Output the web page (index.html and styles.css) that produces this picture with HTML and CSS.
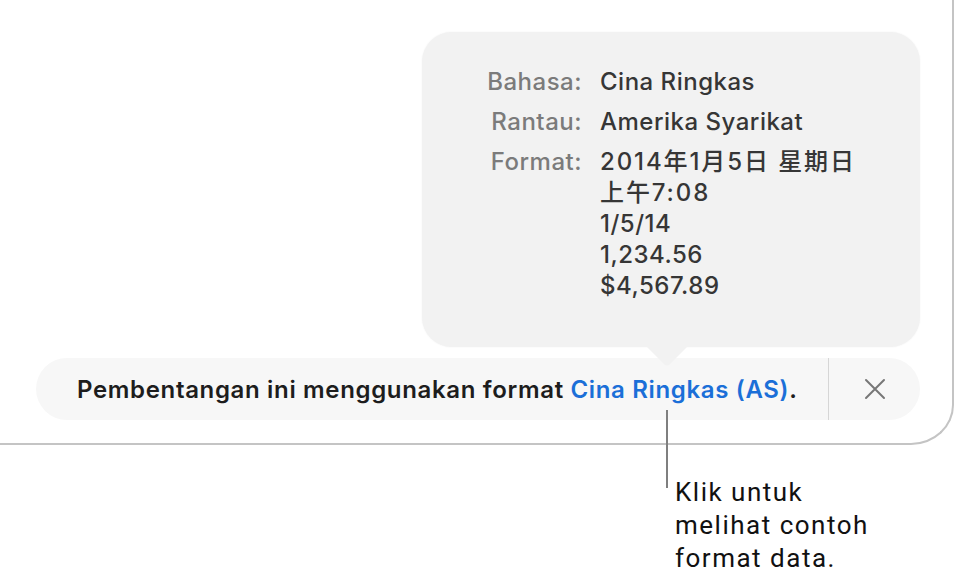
FILE: index.html
```html
<!DOCTYPE html>
<html lang="ms">
<head>
<meta charset="utf-8">
<link rel="stylesheet" href="styles.css">
</head>
<body>
<div class="window">
  <div class="popover">
    <div class="info">
      <div class="label">Bahasa:</div>
      <div class="value">Cina Ringkas</div>
      <div class="label">Rantau:</div>
      <div class="value">Amerika Syarikat</div>
      <div class="label">Format:</div>
      <div class="value lines">
        <span class="cjk">2014年1月5日 星期日</span>
        <span class="cjk">上午7:08</span>
        <span>1/5/14</span>
        <span>1,234.56</span>
        <span>$4,567.89</span>
      </div>
    </div>
    <svg class="arrow" width="40" height="20" viewBox="0 0 40 20"><path d="M0 0 H40 L23 17 Q20 20 17 17 Z" fill="#f2f2f2"/></svg>
  </div>
  <div class="bar">
    <div class="message">Pembentangan ini menggunakan format <span class="link">Cina Ringkas (AS)</span>.</div>
    <div class="sep"></div>
    <div class="close">
      <svg width="22" height="22" viewBox="0 0 22 22"><path d="M2 2 L20 20 M20 2 L2 20" stroke="#777" stroke-width="2" stroke-linecap="round" fill="none"/></svg>
    </div>
  </div>
</div>
<div class="callout">
  <div class="leader"></div>
  <div class="callout-text">Klik untuk<br>melihat contoh<br>format data.</div>
</div>
</body>
</html>
```

FILE: styles.css
```css
html, body {
  margin: 0;
  padding: 0;
  background: #fff;
}
body {
  font-family: Inter, "Noto Sans CJK SC", sans-serif;
  width: 958px;
  height: 577px;
  overflow: hidden;
}
.window {
  width: 952px;
  height: 443px;
  border-right: 2px solid #c4c4c4;
  border-bottom: 2px solid #c4c4c4;
  border-bottom-right-radius: 43px 40px;
  display: flex;
  flex-direction: column;
  box-sizing: content-box;
}
.popover {
  position: relative;
  margin-top: 32px;
  margin-left: 422px;
  width: 498px;
  height: 315px;
  box-sizing: border-box;
  background: #f2f2f2;
  border-radius: 30px;
  box-shadow: 0 0 2px rgba(0,0,0,0.06);
  padding-top: 34px;
  z-index: 2;
}
.info {
  display: grid;
  grid-template-columns: 160px auto;
  column-gap: 18px;
  row-gap: 8px;
  font-size: 24px;
  letter-spacing: 0.5px;
  line-height: 32px;
}
.label {
  text-align: right;
  color: #7b7b7b;
  font-weight: 500;
}
.value {
  color: #363636;
  font-weight: 500;
}
.lines {
  display: flex;
  flex-direction: column;
  line-height: 31px;
}
.cjk {
  letter-spacing: 1.9px;
}
.arrow {
  position: absolute;
  left: 225px;
  top: 315px;
}
.bar {
  margin-top: 11px;
  margin-left: 36px;
  width: 884px;
  height: 62px;
  background: #f7f7f7;
  border-radius: 31px;
  display: flex;
  align-items: center;
}
.message {
  flex: 1;
  padding-left: 41px;
  font-size: 24px;
  font-weight: 600;
  color: #1d1d1d;
  letter-spacing: 0.66px;
}
.link {
  color: #1b6fd8;
}
.sep {
  width: 1.5px;
  align-self: stretch;
  background: #d6d6d6;
}
.close {
  width: 91px;
  display: flex;
  justify-content: center;
  align-items: center;
}
.callout {
  position: relative;
  margin-left: 666px;
  margin-top: 31px;
  display: flex;
}
.leader {
  position: absolute;
  left: 0;
  top: -66px;
  width: 2px;
  height: 78px;
  background: #7f7f7f;
}
.callout-text {
  margin-left: 9px;
  font-family: Roboto, sans-serif;
  font-size: 26px;
  letter-spacing: 1.5px;
  line-height: 33px;
  color: #111;
}
```
